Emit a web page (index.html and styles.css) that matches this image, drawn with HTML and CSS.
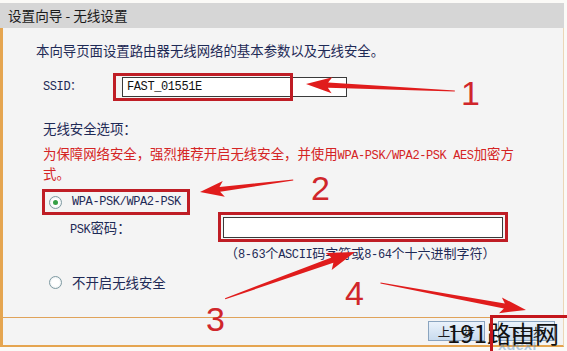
FILE: index.html
```html
<!DOCTYPE html>
<html lang="zh-CN">
<head>
  <meta charset="UTF-8">
  <title>设置向导 - 无线设置</title>
  <link rel="stylesheet" href="styles.css">
</head>
<body>
  <div class="window">
    <div class="titlebar">设置向导 - 无线设置</div>
    <div class="panel">
      <div class="content">
        <p class="intro">本向导页面设置路由器无线网络的基本参数以及无线安全。</p>
        <div class="ssid-row">
          <span class="label en">SSID：</span>
          <div class="input en">FAST_01551E</div>
        </div>
        <p class="section">无线安全选项：</p>
        <p class="warn">为保障网络安全，强烈推荐开启无线安全，并使用<span class="en">WPA-PSK/WPA2-PSK AES</span>加密方式。</p>
        <div class="radio-row first">
          <span class="radio checked"></span>
          <span class="en">WPA-PSK/WPA2-PSK</span>
        </div>
        <div class="psk-row">
          <span class="psk-label"><span class="en">PSK</span>密码：</span>
          <div class="input wide"></div>
        </div>
        <p class="hint">（<span class="en">8-63</span>个<span class="en">ASCII</span>码字符或<span class="en">8-64</span>个十六进制字符）</p>
        <div class="radio-row second">
          <span class="radio"></span>
          <span>不开启无线安全</span>
        </div>
      </div>
      <div class="footer">
        <button class="btn">上一步</button>
        <button class="btn">下一步</button>
      </div>
    </div>
  </div>

  <!-- annotations drawn over the screenshot -->
  <div class="marks">
    <svg class="arrows" width="567" height="351" viewBox="0 0 567 351">
      <g fill="#e01c1c">
        <polygon transform="translate(306 84) rotate(-177.3)" points="0,0 -26,-8 -22,-2.6 -149,-0.5 -149,0.5 -22,2.6 -26,8"/>
        <polygon transform="translate(200 192) rotate(172.6)" points="0,0 -24,-8 -20,-2.4 -94,-0.5 -94,0.5 -20,2.4 -24,8"/>
        <polygon transform="translate(355 252) rotate(-19.8)" points="0,0 -28,-9 -24,-2.8 -138,-0.6 -138,0.6 -24,2.8 -28,9"/>
        <polygon transform="translate(526 310) rotate(10.5)" points="0,0 -26,-8 -22,-2.6 -148,-0.5 -148,0.5 -22,2.6 -26,8"/>
      </g>
    </svg>
    <div class="box box-ssid"></div>
    <div class="box box-radio"></div>
    <div class="box box-psk"></div>
    <span class="num num-1">1</span>
    <span class="num num-2">2</span>
    <span class="num num-3">3</span>
    <span class="num num-4">4</span>
    <span class="wm-sub">xuexi</span>
    <span class="wm">191路由网</span>
    <div class="box box-wm"></div>
  </div>
</body>
</html>
```

FILE: styles.css
```css
* { margin: 0; padding: 0; box-sizing: border-box; }
body {
  width: 567px;
  height: 351px;
  overflow: hidden;
  position: relative;
  background: #fbfaf7;
  font-family: "Noto Sans CJK SC", "Noto Sans", sans-serif;
  font-size: 13.4px;
  color: #1e2a56;
}
.en {
  font-family: "Liberation Mono", monospace;
  font-size: 12px;
  letter-spacing: -0.4px;
  line-height: 12px;
}

.window { width: 564px; padding-top: 3px; }
.titlebar {
  height: 25px;
  line-height: 25px;
  padding-left: 8px;
  background: #d6d6d6;
  color: #1a1a1a;
  font-size: 13.6px;
}
.panel {
  height: 319px;
  display: flex;
  flex-direction: column;
  background: #f4f4f4;
  border-left: 3px solid #e5a550;
  border-right: 1px solid #ecd6b6;
  border-bottom: 2px solid #e5a550;
}
.content { flex: 1; padding: 12px 0 0 33px; }

.intro { height: 20px; line-height: 20px; }

.ssid-row { display: flex; align-items: center; height: 24px; margin-top: 15px; padding-left: 7px; }
.ssid-row .label { width: 79px; }
.input {
  height: 20px;
  width: 225px;
  background: #fff;
  border: 1px solid #3a3a3a;
  color: #111;
  line-height: 18px;
  padding-left: 4px;
}
.input.wide { width: 280px; height: 21px; }

.section { height: 20px; line-height: 20px; margin-top: 19px; padding-left: 7px; }
.warn { width: 485px; height: 40px; line-height: 20px; margin-top: 5px; padding-left: 7px; color: #d42424; }

.radio-row { display: flex; align-items: center; gap: 10px; height: 20px; padding-left: 13px; }
.radio-row.first { margin-top: 9px; }
.radio-row.second { margin-top: 10px; }
.radio {
  width: 13px;
  height: 13px;
  border-radius: 50%;
  border: 1px solid #7f9aa2;
  background: radial-gradient(circle, #ffffff 45%, #dbe4e6);
  display: flex;
  align-items: center;
  justify-content: center;
}
.radio.checked::after {
  content: "";
  width: 5px;
  height: 5px;
  border-radius: 50%;
  background: #35a046;
}

.psk-row { display: flex; align-items: center; height: 22px; margin-top: 4px; padding-left: 34px; }
.psk-label { width: 153px; }

.hint { height: 18px; line-height: 18px; margin-top: 6px; padding-left: 189px; font-size: 13px; }

.footer {
  height: 28px;
  border-top: 1px solid #e0a35a;
  display: flex;
  justify-content: flex-end;
  gap: 13px;
  padding: 3px 8px 0 0;
}
.btn {
  width: 57px;
  height: 20px;
  background: linear-gradient(#eaf2fb, #c8dbee);
  border: 1px solid #8aa4bf;
  font-family: "Noto Sans CJK SC", sans-serif;
  font-size: 12.5px;
  color: #1a1a1a;
}

/* annotation layer */
.marks { position: absolute; left: 0; top: 0; width: 567px; height: 351px; }
.arrows { position: absolute; left: 0; top: 0; }
.box { position: absolute; border: 3px solid #bf1d25; }
.box-ssid { left: 113px; top: 73px; width: 180px; height: 28px; }
.box-radio { left: 42px; top: 189px; width: 148px; height: 26px; }
.box-psk { left: 218px; top: 212px; width: 290px; height: 30px; }
.box-wm { left: 490px; top: 315px; width: 80px; height: 40px; border-color: #c4161c; }

.num {
  position: absolute;
  font-family: "Liberation Sans", sans-serif;
  font-size: 34px;
  line-height: 34px;
  color: #d0262b;
}
.num-1 { left: 461px; top: 76px; }
.num-2 { left: 311px; top: 171px; }
.num-3 { left: 206px; top: 302px; }
.num-4 { left: 345px; top: 276px; }

.wm {
  position: absolute;
  left: 447px;
  top: 320px;
  font-size: 24px;
  line-height: 25px;
  color: #111;
}
.wm-sub {
  position: absolute;
  left: 498px;
  top: 336px;
  font-family: "Liberation Sans", sans-serif;
  font-weight: bold;
  font-size: 15px;
  color: rgba(80, 140, 200, 0.45);
}
```
